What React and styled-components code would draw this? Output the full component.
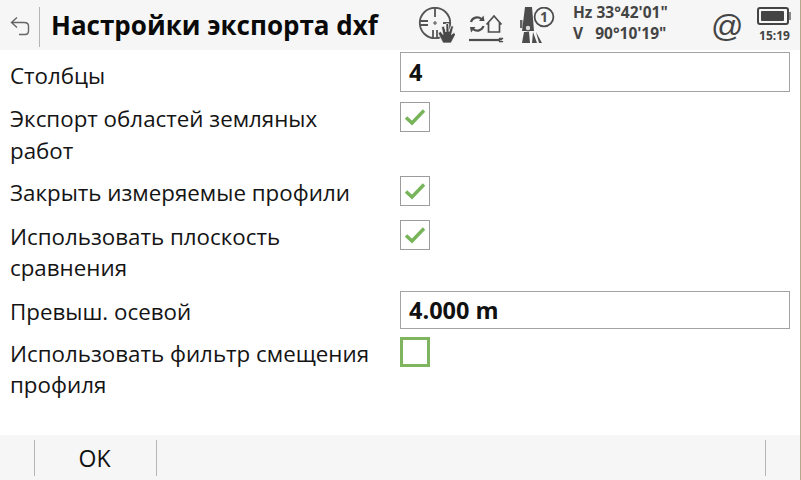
import React from 'react';
import styled, { createGlobalStyle } from 'styled-components';

const Global = createGlobalStyle`
  html, body { margin: 0; padding: 0; background: #fff; }
  body { font-family: "Open Sans", "Noto Sans", sans-serif; color: #111; }
`;

const Screen = styled.div`
  width: 801px;
  height: 480px;
  display: flex;
  flex-direction: column;
  overflow: hidden;
  border-right: 1px solid #b3a88c;
  box-sizing: border-box;
`;

const Header = styled.header`
  height: 50px;
  flex: none;
  display: flex;
  align-items: center;
  background: #f6f6f6;
`;

const BackSlot = styled.div`
  width: 40px;
  height: 40px;
  margin-top: 4px;
  box-sizing: border-box;
  display: flex;
  align-items: center;
  justify-content: center;
  border-right: 1px solid #b5b5b5;
`;

const Title = styled.h1`
  margin: 0 0 0 11px;
  width: 367px;
  font-size: 26px;
  font-weight: 700;
  line-height: 50px;
  color: #0a0a0a;
  white-space: nowrap;
`;

const StatusIcons = styled.div`
  display: flex;
  align-items: center;
  gap: 14px;
  width: 155px;
`;

const Angles = styled.div`
  width: 138px;
  font-size: 15.5px;
  font-weight: 700;
  line-height: 21px;
  color: #444;
  white-space: pre;
  margin-top: -4px;
`;

const At = styled.div`
  width: 46px;
  margin-top: 2px;
  font-family: "Liberation Sans", sans-serif;
  font-size: 32px;
  color: #444;
`;

const BatteryBox = styled.div`
  display: flex;
  flex-direction: column;
  align-items: center;
  gap: 3px;
  font-size: 12px;
  font-weight: 700;
  line-height: 15px;
  color: #444;
`;

const Body = styled.main`
  flex: 1;
  padding-top: 2px;
  display: flex;
  flex-direction: column;
`;

const Row = styled.div`
  display: grid;
  grid-template-columns: 400px 390px;
  margin-top: ${p => p.$top || 0}px;
  align-items: start;
`;

const Label = styled.div`
  padding-left: 10px;
  padding-right: 30px;
  font-size: 22.35px;
  line-height: 31.5px;
  color: #141414;
  padding-top: ${p => p.$pad || 0}px;
`;

const Field = styled.div`
  height: ${p => p.$h || 40}px;
  box-sizing: border-box;
  border: 1px solid #a3a3a3;
  padding-left: 8px;
  display: flex;
  align-items: center;
  font-size: 23.5px;
  font-weight: 700;
  color: #111;
`;

const Check = styled.div`
  width: 30px;
  height: 30px;
  margin-top: -1px;
  box-sizing: border-box;
  border: ${p => (p.$active ? '3px solid #80b55f' : '1px solid #9c9c9c')};
  display: flex;
  align-items: center;
  justify-content: center;
`;

const Footer = styled.footer`
  height: 45px;
  flex: none;
  box-sizing: border-box;
  padding: 5px 0 4px 34px;
  display: flex;
  background: #f6f6f6;
`;

const SoftKey = styled.div`
  width: ${p => p.$w}px;
  flex: none;
  box-sizing: border-box;
  border-left: 1px solid #b5b5b5;
  padding-right: 2px;
  display: flex;
  align-items: center;
  justify-content: center;
  font-size: 23px;
  color: #111;
`;

const BackIcon = () => (
  <svg width="20" height="20" viewBox="0 0 20 20" fill="none" stroke="#666" strokeWidth="1.4">
    <path d="M7 0.5 L1.5 5.5 L7 10.5 M1.5 5.5 H14 Q18.5 5.5 18.5 9 V14 Q18.5 17.5 15 17.5 H9" />
  </svg>
);

const SightIcon = () => (
  <svg width="37" height="37" viewBox="0 0 37 37" fill="none" stroke="#555" strokeWidth="1.8">
    <circle cx="17" cy="16" r="15.2" />
    <path d="M2 14 H10 M2 18 H10 M15 31 V23 M19 31 V23 M17 1 V10 M25 16 H33" />
    <path d="M17 14 V18 M15 16 H19" strokeWidth="1.1" />
    <path
      d="M25 36 L20 26 L22.5 24.5 L25 27.5 L23.5 20 L26 19 L28 25 L28 16.5 L30.5 16.5 L31 24.5 L33.5 18.5 L35.5 19.5 L33.5 27.5 L36 25.5 L37.5 27.5 L33 36 Z"
      fill="#484848"
      stroke="#f6f6f6"
      strokeWidth="0.7"
    />
  </svg>
);

const SyncHomeIcon = () => (
  <svg width="37" height="37" viewBox="0 0 37 37" fill="none" stroke="#4d4d4d" strokeWidth="1.7">
    <path d="M2 15 A6.5 6.5 0 0 1 12.5 12 M14.5 19 A6.5 6.5 0 0 1 4 22" strokeWidth="2.2" />
    <path d="M10 14 L15.5 14 L14.5 8.5 Z M6.5 20 L1 20 L2 25.5 Z" fill="#4d4d4d" stroke="none" />
    <path d="M17.5 17.5 L25 9 L32.5 17.5 M19.5 15.5 V25 H30.5 V15.5" />
    <path d="M0 33 H31" strokeWidth="2.2" />
    <path d="M30 31 L34 35 M34 31 L30 35 M32 30.5 V35.5" strokeWidth="1.2" />
  </svg>
);

const InstrumentIcon = () => (
  <svg width="37" height="37" viewBox="0 0 37 37" fill="none">
    <path d="M5 0 H12 L14 24 H2 Z" fill="#4d4d4d" />
    <rect x="0" y="13" width="2.5" height="8" fill="#666" />
    <path d="M4 25 H9 L10 36 H2 Z M13 25 L17 36 H12 Z M16 25 L22 36 H19 Z" fill="#4d4d4d" />
    <circle cx="8" cy="21" r="2.8" fill="#ddd" stroke="#4d4d4d" strokeWidth="1.2" />
    <circle cx="24" cy="10" r="9.4" fill="#f6f6f6" stroke="#4d4d4d" strokeWidth="1.8" />
    <text x="24" y="15" textAnchor="middle" fontSize="14" fontWeight="700" fontFamily="Open Sans" fill="#4d4d4d">1</text>
  </svg>
);

const BatteryIcon = () => (
  <svg width="35" height="18" viewBox="0 0 35 18">
    <rect x="1" y="1" width="30" height="16" rx="2" fill="#f6f6f6" stroke="#444" strokeWidth="2" />
    <rect x="4" y="4" width="23" height="10" rx="1" fill="#444" />
    <rect x="32" y="5" width="2" height="8" fill="#888" />
  </svg>
);

const CheckMark = () => (
  <svg width="22" height="18" viewBox="0 0 22 18" fill="none">
    <path d="M2 9.5 L8 15 L20 2.5" stroke="#77b45a" strokeWidth="3.4" />
  </svg>
);

function App() {
  return (
    <Screen>
      <Global />
      <Header>
        <BackSlot>
          <BackIcon />
        </BackSlot>
        <Title>Настройки экспорта dxf</Title>
        <StatusIcons>
          <SightIcon />
          <SyncHomeIcon />
          <InstrumentIcon />
        </StatusIcons>
        <Angles>
          {'Hz 33°42\'01"'}
          <br />
          {'V   90°10\'19"'}
        </Angles>
        <At>@</At>
        <BatteryBox>
          <BatteryIcon />
          15:19
        </BatteryBox>
      </Header>
      <Body>
        <Row>
          <Label $pad={8}>Столбцы</Label>
          <Field>4</Field>
        </Row>
        <Row $top={11}>
          <Label>Экспорт областей земляных работ</Label>
          <Check><CheckMark /></Check>
        </Row>
        <Row $top={11}>
          <Label>Закрыть измеряемые профили</Label>
          <Check><CheckMark /></Check>
        </Row>
        <Row $top={12}>
          <Label>Использовать плоскость сравнения</Label>
          <Check><CheckMark /></Check>
        </Row>
        <Row $top={7}>
          <Label $pad={5}>Превыш. осевой</Label>
          <Field $h={38}>4.000 m</Field>
        </Row>
        <Row $top={9}>
          <Label>Использовать фильтр смещения профиля</Label>
          <Check $active />
        </Row>
      </Body>
      <Footer>
        <SoftKey $w={122}>OK</SoftKey>
        <SoftKey $w={609} />
        <SoftKey $w={35} />
      </Footer>
    </Screen>
  );
}

export default App;
